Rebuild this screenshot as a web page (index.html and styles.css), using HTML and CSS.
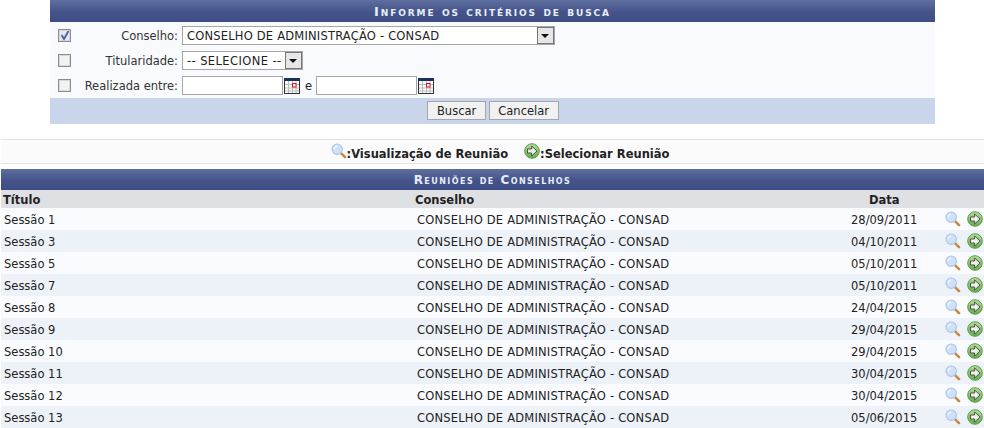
FILE: index.html
```html
<!DOCTYPE html>
<html lang="pt">
<head>
<meta charset="utf-8">
<title>Reuniões de Conselhos</title>
<link rel="stylesheet" href="styles.css">
</head>
<body>
<svg class="defs" width="0" height="0" aria-hidden="true">
  <defs>
    <linearGradient id="verde" x1="0" y1="0" x2="0" y2="1">
      <stop offset="0" stop-color="#b5dd9d"/>
      <stop offset="1" stop-color="#63ab49"/>
    </linearGradient>
    <symbol id="lupa" viewBox="0 0 16 16">
      <path d="M10 10.2 L14 14.2" stroke="#c98a48" stroke-width="2.6" stroke-linecap="round"/>
      <circle cx="6.2" cy="6.2" r="5.2" fill="#cfe1f8" stroke="#a9c4e8" stroke-width="1.1"/>
      <path d="M3.2 6.2 A3 3 0 0 1 6.2 3.2" fill="none" stroke="#f4f9ff" stroke-width="1.3"/>
    </symbol>
    <symbol id="seta" viewBox="0 0 16 16">
      <circle cx="8" cy="8" r="7.3" fill="url(#verde)" stroke="#5c9c48" stroke-width="1"/>
      <path d="M3.5 6 H7.6 V3 L13 8 L7.6 13 V10 H3.5 Z" fill="#efefea" stroke="#484c45" stroke-width="0.95"/>
    </symbol>
    <symbol id="cal" viewBox="0 0 16 16">
      <rect x="0.5" y="0.5" width="15" height="15" fill="#fff" stroke="#333"/>
      <rect x="0" y="0" width="16" height="3" fill="#16305f"/>
      <path d="M4.5 3V15M8.5 3V15M12 3V15M1 6.5H15M1 10H15M1 13H15" stroke="#bbb" stroke-width="1"/>
      <rect x="8.5" y="5.5" width="3.5" height="3.5" fill="#fff" stroke="#e0101c" stroke-width="1"/>
    </symbol>
  </defs>
</svg>

<form class="busca">
  <h2 class="titulo titulo-busca">Informe os critérios de busca</h2>
  <div class="campos">
    <div class="linha">
      <span class="check marcado">
        <svg viewBox="0 0 11 11" width="11" height="11"><path d="M2.5 5 L5 9 L9.5 1" fill="none" stroke="#4a5f9c" stroke-width="1.8"/></svg>
      </span>
      <label class="rotulo">Conselho:</label>
      <span class="select select-largo"><span class="select-texto">CONSELHO DE ADMINISTRAÇÃO - CONSAD</span><span class="select-seta"></span></span>
    </div>
    <div class="linha">
      <span class="check"></span>
      <label class="rotulo">Titularidade:</label>
      <span class="select select-curto"><span class="select-texto">-- SELECIONE --</span><span class="select-seta"></span></span>
    </div>
    <div class="linha">
      <span class="check"></span>
      <label class="rotulo">Realizada entre:</label>
      <span class="entrada"></span>
      <svg class="cal"><use href="#cal"/></svg>
      <span class="e">e</span>
      <span class="entrada"></span>
      <svg class="cal"><use href="#cal"/></svg>
    </div>
  </div>
  <div class="acoes">
    <span class="botao">Buscar</span>
    <span class="botao">Cancelar</span>
  </div>
</form>

<div class="legenda">
  <svg class="ico-leg"><use href="#lupa"/></svg><span>:Visualização de Reunião</span>
  <svg class="ico-leg ico-seta"><use href="#seta"/></svg><span>:Selecionar Reunião</span>
</div>

<h2 class="titulo titulo-lista">Reuniões de Conselhos</h2>
<table class="lista">
  <thead>
    <tr><th class="c-titulo">Título</th><th class="c-conselho">Conselho</th><th class="c-data">Data</th><th></th></tr>
  </thead>
  <tbody>
    <tr><td>Sessão 1</td><td class="nome">CONSELHO DE ADMINISTRAÇÃO - CONSAD</td><td class="dt">28/09/2011</td><td class="ic"><svg><use href="#lupa"/></svg><svg><use href="#seta"/></svg></td></tr>
    <tr><td>Sessão 3</td><td class="nome">CONSELHO DE ADMINISTRAÇÃO - CONSAD</td><td class="dt">04/10/2011</td><td class="ic"><svg><use href="#lupa"/></svg><svg><use href="#seta"/></svg></td></tr>
    <tr><td>Sessão 5</td><td class="nome">CONSELHO DE ADMINISTRAÇÃO - CONSAD</td><td class="dt">05/10/2011</td><td class="ic"><svg><use href="#lupa"/></svg><svg><use href="#seta"/></svg></td></tr>
    <tr><td>Sessão 7</td><td class="nome">CONSELHO DE ADMINISTRAÇÃO - CONSAD</td><td class="dt">05/10/2011</td><td class="ic"><svg><use href="#lupa"/></svg><svg><use href="#seta"/></svg></td></tr>
    <tr><td>Sessão 8</td><td class="nome">CONSELHO DE ADMINISTRAÇÃO - CONSAD</td><td class="dt">24/04/2015</td><td class="ic"><svg><use href="#lupa"/></svg><svg><use href="#seta"/></svg></td></tr>
    <tr><td>Sessão 9</td><td class="nome">CONSELHO DE ADMINISTRAÇÃO - CONSAD</td><td class="dt">29/04/2015</td><td class="ic"><svg><use href="#lupa"/></svg><svg><use href="#seta"/></svg></td></tr>
    <tr><td>Sessão 10</td><td class="nome">CONSELHO DE ADMINISTRAÇÃO - CONSAD</td><td class="dt">29/04/2015</td><td class="ic"><svg><use href="#lupa"/></svg><svg><use href="#seta"/></svg></td></tr>
    <tr><td>Sessão 11</td><td class="nome">CONSELHO DE ADMINISTRAÇÃO - CONSAD</td><td class="dt">30/04/2015</td><td class="ic"><svg><use href="#lupa"/></svg><svg><use href="#seta"/></svg></td></tr>
    <tr><td>Sessão 12</td><td class="nome">CONSELHO DE ADMINISTRAÇÃO - CONSAD</td><td class="dt">30/04/2015</td><td class="ic"><svg><use href="#lupa"/></svg><svg><use href="#seta"/></svg></td></tr>
    <tr><td>Sessão 13</td><td class="nome">CONSELHO DE ADMINISTRAÇÃO - CONSAD</td><td class="dt">05/06/2015</td><td class="ic"><svg><use href="#lupa"/></svg><svg><use href="#seta"/></svg></td></tr>
  </tbody>
</table>
</body>
</html>
```
FILE: styles.css
```css
html, body { margin: 0; padding: 0; }
body {
  width: 984px;
  height: 428px;
  overflow: hidden;
  background: #fff;
  font-family: "DejaVu Sans", Verdana, sans-serif;
  font-size: 11.5px;
  color: #222;
}
.defs { position: absolute; }

.titulo {
  margin: 0;
  text-align: center;
  color: #e8edf8;
  font-weight: bold;
  font-variant: small-caps;
  background: linear-gradient(#5e6e9e, #44548a 55%, #3f4f85);
}
.titulo-busca { height: 22px; line-height: 24px; font-size: 13px; letter-spacing: 1.9px; }
.titulo-lista { height: 21px; line-height: 22px; font-size: 12px; letter-spacing: 1.45px; }

.busca { width: 885px; margin: 0 0 0 50px; }
.campos {
  height: 76px;
  box-sizing: border-box;
  padding-top: 1px;
  background: #f9fafd;
}
.linha { display: flex; align-items: center; height: 25px; }
.check {
  width: 11px; height: 11px;
  margin-left: 8px;
  border: 1px solid #8d8d8d;
  box-shadow: inset 0 0 0 1px #d8d8d8;
  background: #f2f2f2;
  display: block;
  flex: none;
}
.marcado { background: #dfe6f5; }
.marcado svg { display: block; }
.rotulo { width: 107px; margin-right: 4px; padding-top: 1px; text-align: right; color: #333; flex: none; }
.select {
  display: flex;
  align-items: stretch;
  box-sizing: border-box;
  height: 19px;
  border: 1px solid #a6a6a6;
  background: #fff;
  color: #222;
}
.select-largo { width: 373px; }
.select-curto { width: 121px; }
.select-largo .select-texto { letter-spacing: 0.2px; }
.select-curto .select-texto { letter-spacing: 0.4px; }
.select-texto { flex: 1; line-height: 19px; padding-left: 4px; white-space: nowrap; }
.select-seta {
  width: 17px;
  background: #e6e6e6;
  border: 1px solid #777;
  box-sizing: border-box;
  position: relative;
}
.select-seta::after {
  content: "";
  position: absolute;
  left: 3px; top: 6px;
  border-left: 4px solid transparent;
  border-right: 4px solid transparent;
  border-top: 4px solid #111;
}
.entrada {
  display: block;
  box-sizing: border-box;
  width: 101px; height: 19px;
  border: 1px solid #a6a6a6;
  background: #fff;
}
.cal { width: 16px; height: 16px; margin-left: 1px; flex: none; }
.e { margin: 0 4px 0 5px; }

.acoes {
  display: flex;
  justify-content: center;
  gap: 3px;
  height: 26px;
  box-sizing: border-box;
  padding-top: 3px;
  padding-left: 1px;
  background: #c9d5eb;
}
.botao {
  display: block;
  box-sizing: border-box;
  height: 19px;
  line-height: 18px;
  padding: 0 8.5px;
  border: 1px solid #a6a6a6;
  background: #f1f1f1;
  color: #222;
}

.legenda {
  display: flex;
  align-items: center;
  justify-content: center;
  box-sizing: border-box;
  height: 25px;
  margin-top: 15px;
  margin-left: 1px;
  padding-top: 5px;
  padding-left: 15px;
  border-top: 1px solid #e3e3e3;
  border-bottom: 1px solid #e3e3e3;
  background: #fbfbfb;
  font-weight: bold;
  color: #222;
}
.ico-leg { width: 16px; height: 16px; flex: none; margin-top: -6px; }
.ico-seta { margin-left: 16px; }

.titulo-lista { margin: 5px 0 0 1px; }
.lista {
  width: 983px;
  margin-left: 1px;
  border-collapse: collapse;
  table-layout: fixed;
}
.lista th {
  box-sizing: border-box;
  height: 18px;
  padding: 2px 0 0 2px;
  background: #dee0e4;
  text-align: left;
  font-weight: bold;
  color: #222;
}
.lista th.c-titulo { width: 412px; }
.lista th.c-conselho { width: 438px; }
.lista th.c-data { width: 90px; padding-left: 18px; }
.lista td { box-sizing: border-box; height: 22px; padding: 2px 0 0 3px; white-space: nowrap; }
.lista tbody tr:nth-child(odd) { background: #fafbfe; }
.lista tbody tr:nth-child(even) { background: #edf1f8; }
.lista td.nome { padding-left: 4px; letter-spacing: 0.2px; }
.lista td.dt { padding-left: 0; text-align: left; }
.lista td.ic { padding: 0; white-space: nowrap; }
.lista td.ic svg { width: 16px; height: 16px; vertical-align: middle; margin-left: 4px; }
.lista td.ic svg + svg { margin-left: 6px; }
```
